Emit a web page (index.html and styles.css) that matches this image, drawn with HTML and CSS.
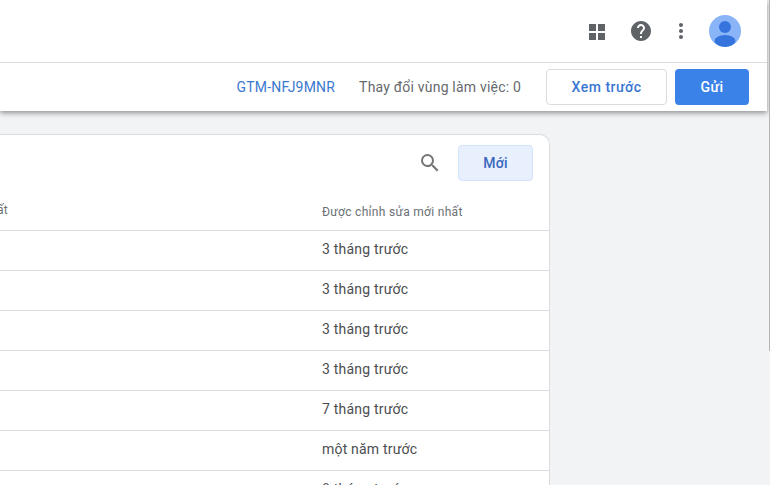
FILE: index.html
```html
<!DOCTYPE html>
<html lang="vi">
<head>
<meta charset="utf-8">
<title>Tag Manager</title>
<link rel="stylesheet" href="styles.css">
</head>
<body>
<div class="page">
  <header class="header">
    <div class="topbar">
      <svg class="icon apps" width="24" height="24" viewBox="0 0 24 24"><path d="M4 5h7v7H4zM13 5h7v7h-7zM4 14h7v7H4zM13 14h7v7h-7z" fill="#5f6368"/></svg>
      <svg class="icon help" width="24" height="24" viewBox="0 0 24 24"><path fill="#5f6368" d="M12 2C6.48 2 2 6.48 2 12s4.48 10 10 10 10-4.48 10-10S17.52 2 12 2zm1 17h-2v-2h2v2zm2.07-7.75l-.9.92C13.45 12.9 13 13.5 13 15h-2v-.5c0-1.1.45-2.1 1.17-2.83l1.24-1.26c.37-.36.59-.86.59-1.41 0-1.1-.9-2-2-2s-2 .9-2 2H8c0-2.21 1.79-4 4-4s4 1.79 4 4c0 .88-.36 1.68-.93 2.25z"/></svg>
      <svg class="icon more" width="24" height="24" viewBox="0 0 24 24"><path fill="#5f6368" d="M12 8c1.1 0 2-.9 2-2s-.9-2-2-2-2 .9-2 2 .9 2 2 2zm0 2c-1.1 0-2 .9-2 2s.9 2 2 2 2-.9 2-2-.9-2-2-2zm0 6c-1.1 0-2 .9-2 2s.9 2 2 2 2-.9 2-2-.9-2-2-2z"/></svg>
      <svg class="avatar" width="32" height="32" viewBox="0 0 32 32"><defs><clipPath id="c"><circle cx="16" cy="16" r="16"/></clipPath></defs><g clip-path="url(#c)"><rect width="32" height="32" fill="#8ab4f8"/><circle cx="16" cy="12" r="6" fill="#3574dc"/><ellipse cx="16" cy="26" rx="10.5" ry="6" fill="#3574dc"/></g></svg>
    </div>
    <div class="subbar">
      <a class="container-id">GTM-NFJ9MNR</a>
      <span class="changes">Thay đổi vùng làm việc: 0</span>
      <button class="btn btn-outline">Xem trước</button>
      <button class="btn btn-primary">Gửi</button>
    </div>
  </header>
  <main class="main">
    <section class="card">
      <div class="toolbar">
        <svg class="search" width="24" height="24" viewBox="0 0 24 24"><path fill="#757575" d="M15.5 14h-.79l-.28-.27A6.471 6.471 0 0 0 16 9.5 6.5 6.5 0 1 0 9.5 16c1.61 0 3.09-.59 4.23-1.57l.27.28v.79l5 4.99L20.49 19l-4.99-5zm-6 0C7.01 14 5 11.99 5 9.5S7.01 5 9.5 5 14 7.01 14 9.5 11.99 14 9.5 14z"/></svg>
        <button class="btn btn-new">Mới</button>
      </div>
      <div class="row head"><span class="cut">ất</span><span class="col">Được chỉnh sửa mới nhất</span></div>
      <div class="row"><span class="col">3 tháng trước</span></div>
      <div class="row"><span class="col">3 tháng trước</span></div>
      <div class="row"><span class="col">3 tháng trước</span></div>
      <div class="row"><span class="col">3 tháng trước</span></div>
      <div class="row"><span class="col">7 tháng trước</span></div>
      <div class="row"><span class="col">một năm trước</span></div>
      <div class="row"><span class="col">8 tháng trước</span></div>
    </section>
  </main>
  <div class="edge"></div>
</div>
</body>
</html>
```
FILE: styles.css
```css
* { box-sizing: border-box; }
html, body { margin: 0; height: 100%; overflow: hidden; }
body { font-family: Roboto, "Liberation Sans", sans-serif; background: #f1f3f4; color: #3c4043; }
.page { position: relative; height: 485px; overflow: hidden; }
.header { background: #fff; box-shadow: 0 2px 5px rgba(60,64,67,.55); position: relative; z-index: 1; width: 767px; }
.topbar { height: 63px; display: flex; align-items: center; justify-content: flex-end; border-bottom: 1px solid #dadce0; padding: 0 26px 0 0; }
.icon { display: block; }
.apps { margin-right: 20px; }
.help { margin-right: 16px; }
.more { margin-right: 16px; }
.avatar { display: block; }
.subbar { height: 48px; display: flex; align-items: center; justify-content: flex-end; padding: 0 18px 0 0; font-size: 14px; letter-spacing: .2px; }
.container-id { color: #3b78d0; font-size: 14px; margin-right: 24px; }
.changes { color: #666a6e; margin-right: 25px; }
.btn { font-family: Roboto, "Liberation Sans", sans-serif; font-size: 14px; font-weight: 500; border-radius: 4px; height: 36px; cursor: pointer; letter-spacing: .5px; }
.btn-outline { width: 121px; background: #fff; border: 1px solid #dadce0; color: #3a76d4; margin-right: 8px; }
.btn-primary { width: 74px; background: #3b82e8; border: 0; color: #fff; }
.main { padding: 23px 0 0; }
.card { width: 550px; background: #fff; border: 1px solid #dadce0; border-left: 0; border-radius: 0 10px 0 0; }
.toolbar { height: 56px; display: flex; align-items: center; justify-content: flex-end; padding: 0 16px 0 0; }
.search { margin-right: 16px; }
.btn-new { width: 75px; background: #e8f0fe; border: 1px solid #d2e3fc; color: #3a68bc; letter-spacing: .2px; }
.row { height: 40px; border-bottom: 1px solid #dadce0; display: flex; align-items: center; padding: 0 0 4px 322px; font-size: 14px; letter-spacing: .2px; color: #4a4d50; position: relative; }
.head { font-size: 12px; letter-spacing: .3px; color: #6b6f73; padding-top: 2px; padding-bottom: 0; }
.cut { position: absolute; left: -3px; top: 12px; }
.edge { position: absolute; right: 0; top: 0; width: 1px; height: 351px; background: #b4b4b4; z-index: 2; }
```
